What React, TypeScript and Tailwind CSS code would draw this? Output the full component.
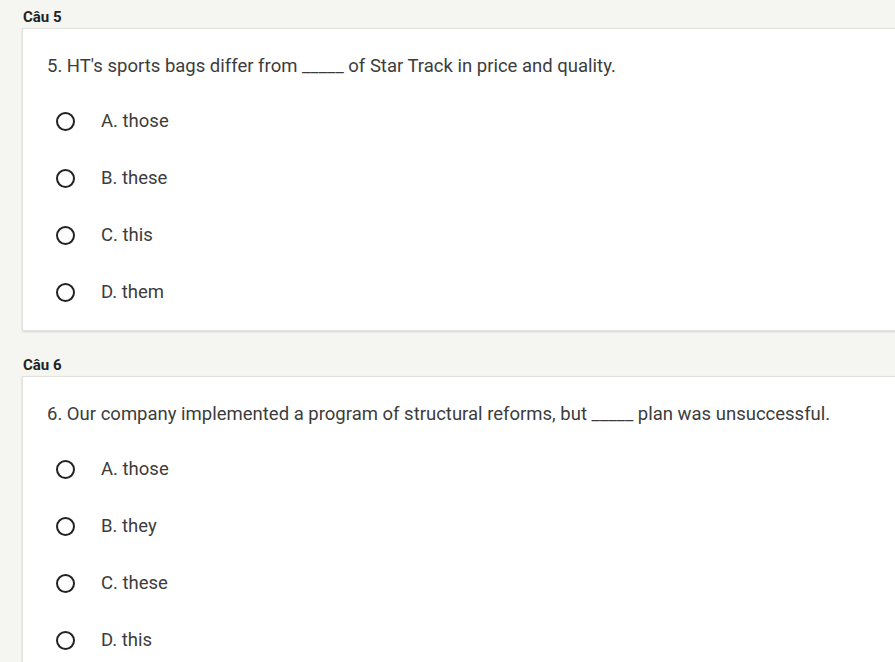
const questions = [
  {
    label: "Câu 5",
    text: "5. HT's sports bags differ from _____ of Star Track in price and quality.",
    options: ["A. those", "B. these", "C. this", "D. them"],
  },
  {
    label: "Câu 6",
    text: "6. Our company implemented a program of structural reforms, but _____ plan was unsuccessful.",
    options: ["A. those", "B. they", "C. these", "D. this"],
  },
];

export default function App() {
  return (
    <div className="w-[895px] h-[662px] overflow-hidden bg-[#f5f5f1] pt-[7px] font-['Roboto',sans-serif]">
      {questions.map((q, i) => (
        <div key={q.label} className={i > 0 ? "mt-[24px]" : ""}>
          <div className="pl-[23px] h-[21px] text-[15px] leading-[21px] font-bold text-[#222]">
            {q.label}
          </div>
          <div className="ml-[22px] w-[900px] bg-white border border-[#e2e2dc] shadow-[0_1px_2px_rgba(0,0,0,0.12)] pl-[24px] pt-[25px] pb-[9px]">
            <p className="text-[18.5px] leading-[24px] text-[#3c3c3c]">{q.text}</p>
            <div className="mt-[15px]">
              {q.options.map((o) => (
                <div key={o} className="h-[57px] flex items-center">
                  <span className="ml-[9px] w-[19px] h-[19px] rounded-full border-2 border-[#222] shrink-0" />
                  <span className="ml-[26px] text-[18.5px] text-[#3c3c3c]">{o}</span>
                </div>
              ))}
            </div>
          </div>
        </div>
      ))}
    </div>
  );
}
